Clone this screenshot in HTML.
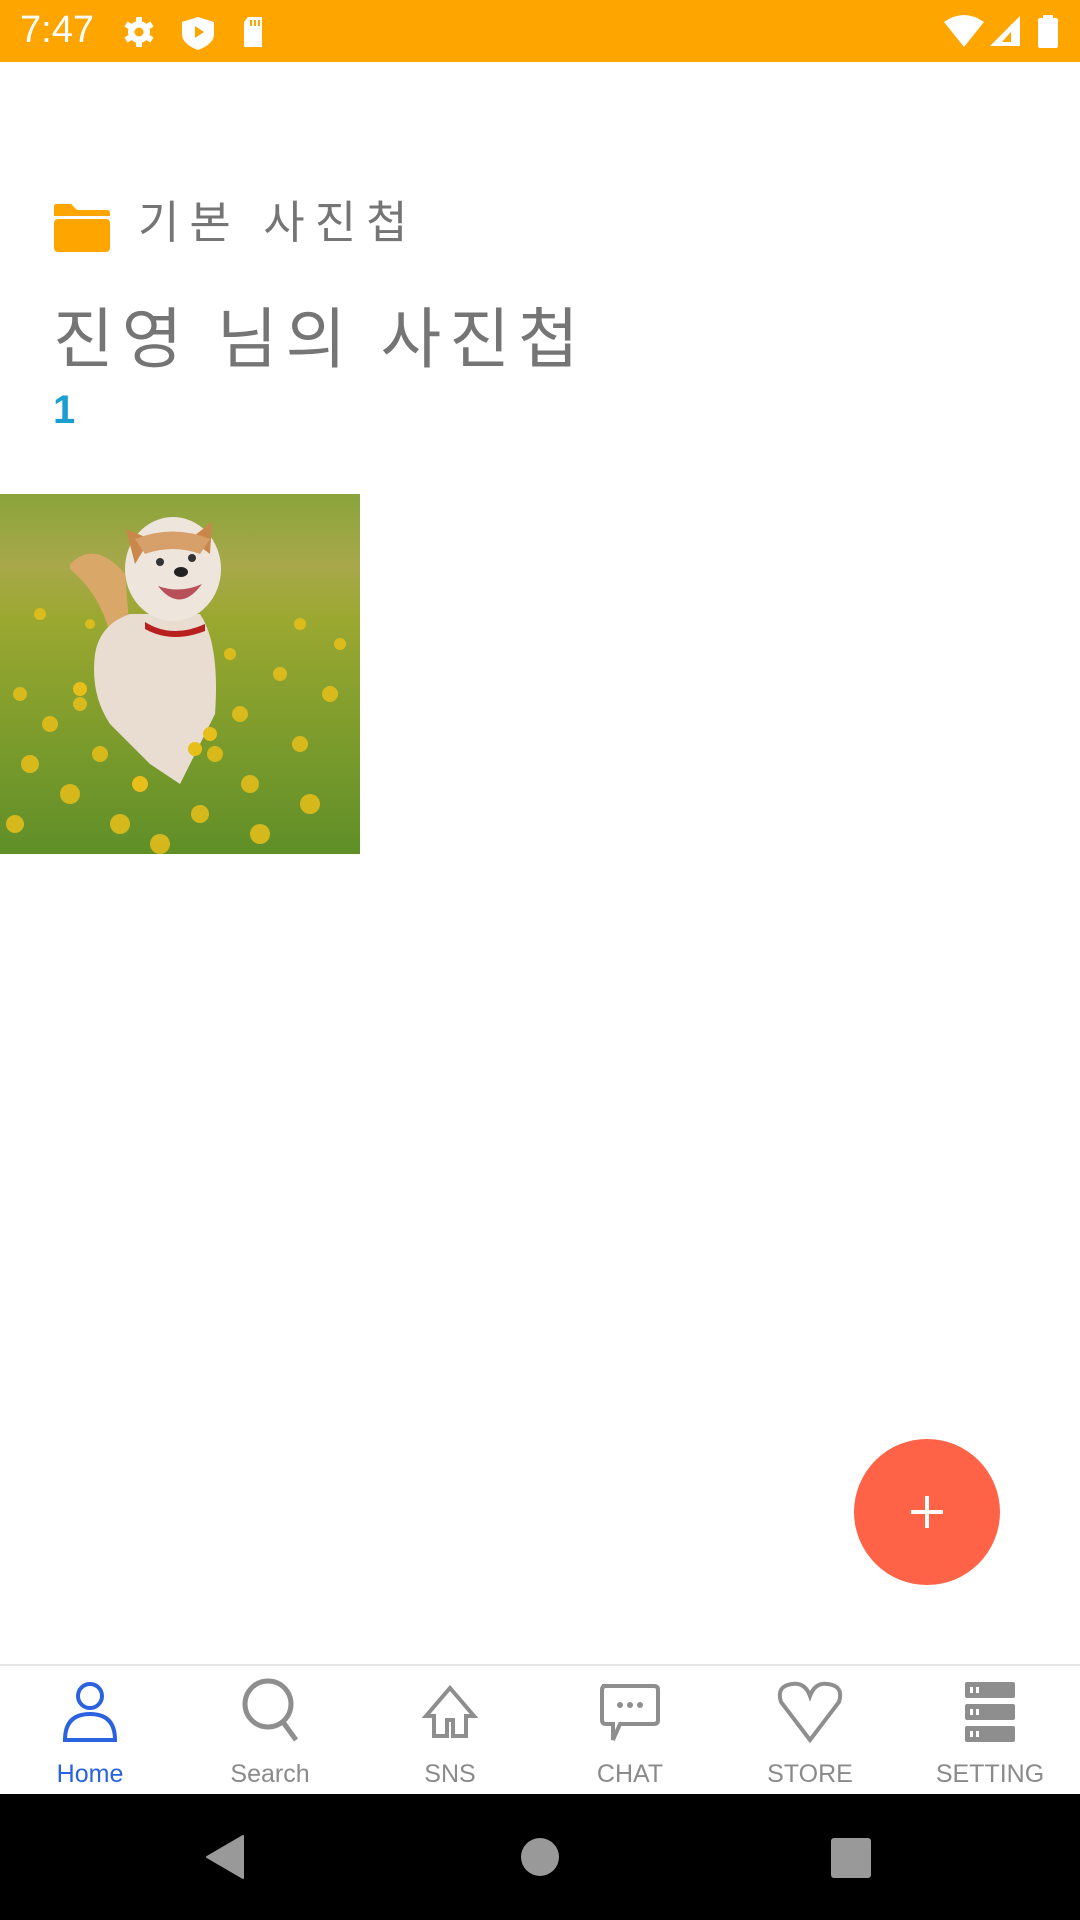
<!DOCTYPE html>
<html><head><meta charset="utf-8"><style>
html,body{margin:0;padding:0;width:1080px;height:1920px;overflow:hidden;background:#fff;font-family:"Liberation Sans","Noto Sans CJK KR",sans-serif;position:relative}
.a{position:absolute}
.sb{left:0;top:0;width:1080px;height:62px;background:#FFA500}
.lbl{position:absolute;top:1760px;width:180px;text-align:center;font-size:25px;color:#8a8a8a}
</style></head><body>
<div class="a sb"></div>
<div class="a" style="left:20px;top:9px;font-size:38px;color:#fff">7:47</div>
<svg class="a" style="left:120px;top:14px" width="160" height="36" viewBox="0 0 160 36">
 <g fill="#fff">
 <circle cx="19" cy="18" r="11"/>
 <g stroke="#fff" stroke-width="6"><line x1="19" y1="3" x2="19" y2="33"/><line x1="6" y1="10" x2="32" y2="26"/><line x1="6" y1="26" x2="32" y2="10"/></g>
 <circle cx="19" cy="18" r="4.5" fill="#FFA500"/>
 <path d="M78 3 L94 8 L94 20 Q94 30 78 36 Q62 30 62 20 L62 8Z"/>
 <path d="M75 12 L84 18 L75 24Z" fill="#FFA500"/>
 <path d="M128 3 L142 3 L142 33 L124 33 L124 8Z"/>
 <g stroke="#FFA500" stroke-width="2"><line x1="131" y1="6" x2="131" y2="12"/><line x1="135" y1="6" x2="135" y2="12"/><line x1="139" y1="6" x2="139" y2="12"/></g>
 </g></svg>
<svg class="a" style="left:940px;top:14px" width="130" height="36" viewBox="0 0 130 36">
 <g fill="#fff">
 <path d="M4 8 Q24 -6 44 8 L24 33Z"/>
 <path d="M80 2 L80 32 L50 32Z"/><path d="M76 12 L76 28 L62 28Z" fill="#FFA500"/><rect x="71" y="10" width="5" height="18"/>
 <rect x="98" y="4" width="20" height="30" rx="2"/><rect x="103" y="1" width="10" height="4"/>
 </g></svg>

<svg class="a" style="left:53px;top:204px" width="58" height="48" viewBox="0 0 58 48">
 <path d="M3 0 H18 L24 6 H54 Q57 6 57 9 V12 H1 V3 Q1 0 3 0Z" fill="#FFA500"/>
 <rect x="1" y="15" width="56" height="33" rx="4" fill="#FFA500"/>
</svg>
<div class="a" style="left:138px;top:186px;font-size:45px;color:#757575;letter-spacing:10px">기본 사진첩</div>
<div class="a" style="left:53px;top:286px;font-size:66px;color:#757575;letter-spacing:8px">진영 님의 사진첩</div>
<div class="a" style="left:53px;top:388px;font-size:40px;color:#1a9fd0;font-weight:bold">1</div>

<svg class="a" style="left:0;top:494px" width="360" height="360" viewBox="0 0 360 360">
 <defs><linearGradient id="bg" x1="0" y1="0" x2="0" y2="1"><stop offset="0" stop-color="#8aa43a"/><stop offset="0.2" stop-color="#a8a84a"/><stop offset="0.35" stop-color="#9aa830"/><stop offset="1" stop-color="#5f8f28"/></linearGradient></defs>
 <rect width="360" height="360" fill="url(#bg)"/>
 <g fill="#e8bf1a" opacity="0.85">
 <circle cx="20" cy="200" r="7"/><circle cx="50" cy="230" r="8"/><circle cx="80" cy="210" r="7"/><circle cx="30" cy="270" r="9"/><circle cx="70" cy="300" r="10"/><circle cx="15" cy="330" r="9"/><circle cx="120" cy="330" r="10"/><circle cx="200" cy="320" r="9"/><circle cx="250" cy="290" r="9"/><circle cx="300" cy="250" r="8"/><circle cx="330" cy="200" r="8"/><circle cx="280" cy="180" r="7"/><circle cx="240" cy="220" r="8"/><circle cx="310" cy="310" r="10"/><circle cx="160" cy="350" r="10"/><circle cx="340" cy="150" r="6"/><circle cx="230" cy="160" r="6"/><circle cx="100" cy="260" r="8"/><circle cx="40" cy="120" r="6"/><circle cx="260" cy="340" r="10"/><circle cx="215" cy="260" r="8"/><circle cx="90" cy="130" r="5"/><circle cx="300" cy="130" r="6"/>
 </g>
 <path d="M70 70 Q95 45 125 80 L130 140 L110 140 Q100 100 70 75Z" fill="#d9a868"/>
 <path d="M95 160 Q100 130 130 120 L200 120 Q220 150 215 220 L180 290 L150 270 L110 230 Q90 200 95 160Z" fill="#e8ddd0"/>
 <ellipse cx="173" cy="75" rx="48" ry="52" fill="#eee6dc"/>
 <path d="M126 35 L150 45 L135 70Z" fill="#c9884a"/><path d="M212 28 L190 45 L210 60Z" fill="#c9884a"/>
 <path d="M135 45 Q173 30 210 45 L200 60 Q173 50 145 60Z" fill="#d7a06a"/>
 <circle cx="160" cy="68" r="4" fill="#333"/><circle cx="192" cy="64" r="4" fill="#333"/>
 <ellipse cx="181" cy="78" rx="7" ry="5" fill="#222"/>
 <path d="M158 92 Q180 120 202 90 Q180 100 158 92Z" fill="#b8505a"/>
 <path d="M145 128 Q172 145 205 130 L205 137 Q172 150 145 135Z" fill="#b82020"/>
 <g fill="#e8bf1a"><circle cx="140" cy="290" r="8"/><circle cx="195" cy="255" r="7"/><circle cx="80" cy="195" r="7"/><circle cx="210" cy="240" r="7"/></g>
</svg>

<div class="a" style="left:854px;top:1439px;width:146px;height:146px;border-radius:50%;background:#FF6347"></div>
<div class="a" style="left:911px;top:1510px;width:32px;height:4px;background:#fff"></div>
<div class="a" style="left:925px;top:1496px;width:4px;height:32px;background:#fff"></div>

<div class="a" style="left:0;top:1664px;width:1080px;height:2px;background:#e6e6e6"></div>
<svg class="a" style="left:0;top:1676px" width="1080" height="80" viewBox="0 0 1080 80" fill="none" stroke-width="4">
 <g stroke="#2a62e0"><circle cx="90" cy="20" r="12"/><path d="M65 64 Q65 38 90 38 Q115 38 115 64Z"/></g>
 <g stroke="#8e8e8e"><circle cx="268" cy="28" r="23" stroke-width="5"/><line x1="283" y1="46" x2="296" y2="64" stroke-width="5"/>
 <path d="M450 12 L474 40 L466 40 L466 60 L453 60 L453 44 L447 44 L447 60 L434 60 L434 40 L426 40Z" stroke-width="4"/>
 <path d="M602 10 H654 Q658 10 658 14 V44 Q658 48 654 48 H620 L613 64 L613 48 H606 Q602 48 602 44 V14 Q602 10 606 10Z"/>
 <path d="M810 64 L781 26 Q776 10 792 8 Q805 6 810 20 Q815 6 828 8 Q844 10 839 26Z"/></g>
 <g fill="#8e8e8e"><circle cx="620" cy="29" r="3"/><circle cx="630" cy="29" r="3"/><circle cx="640" cy="29" r="3"/>
 <rect x="965" y="6" width="50" height="16" rx="2"/><rect x="965" y="28" width="50" height="16" rx="2"/><rect x="965" y="50" width="50" height="16" rx="2"/></g>
 <g fill="#fff"><rect x="970" y="11" width="3" height="6"/><rect x="976" y="11" width="3" height="6"/><rect x="970" y="33" width="3" height="6"/><rect x="976" y="33" width="3" height="6"/><rect x="970" y="55" width="3" height="6"/><rect x="976" y="55" width="3" height="6"/></g>
</svg>
<div class="lbl" style="left:0;color:#2a62e0">Home</div>
<div class="lbl" style="left:180px">Search</div>
<div class="lbl" style="left:360px">SNS</div>
<div class="lbl" style="left:540px">CHAT</div>
<div class="lbl" style="left:720px">STORE</div>
<div class="lbl" style="left:900px">SETTING</div>

<div class="a" style="left:0;top:1794px;width:1080px;height:126px;background:#000"></div>
<svg class="a" style="left:0;top:1830px" width="1080" height="56" viewBox="0 0 1080 56">
 <path d="M243 6 L243 48 L207 27Z" fill="#999" stroke="#999" stroke-width="2" stroke-linejoin="round"/>
 <circle cx="540" cy="27" r="19" fill="#999"/>
 <rect x="831" y="8" width="40" height="40" rx="3" fill="#999"/>
</svg>
</body></html>
